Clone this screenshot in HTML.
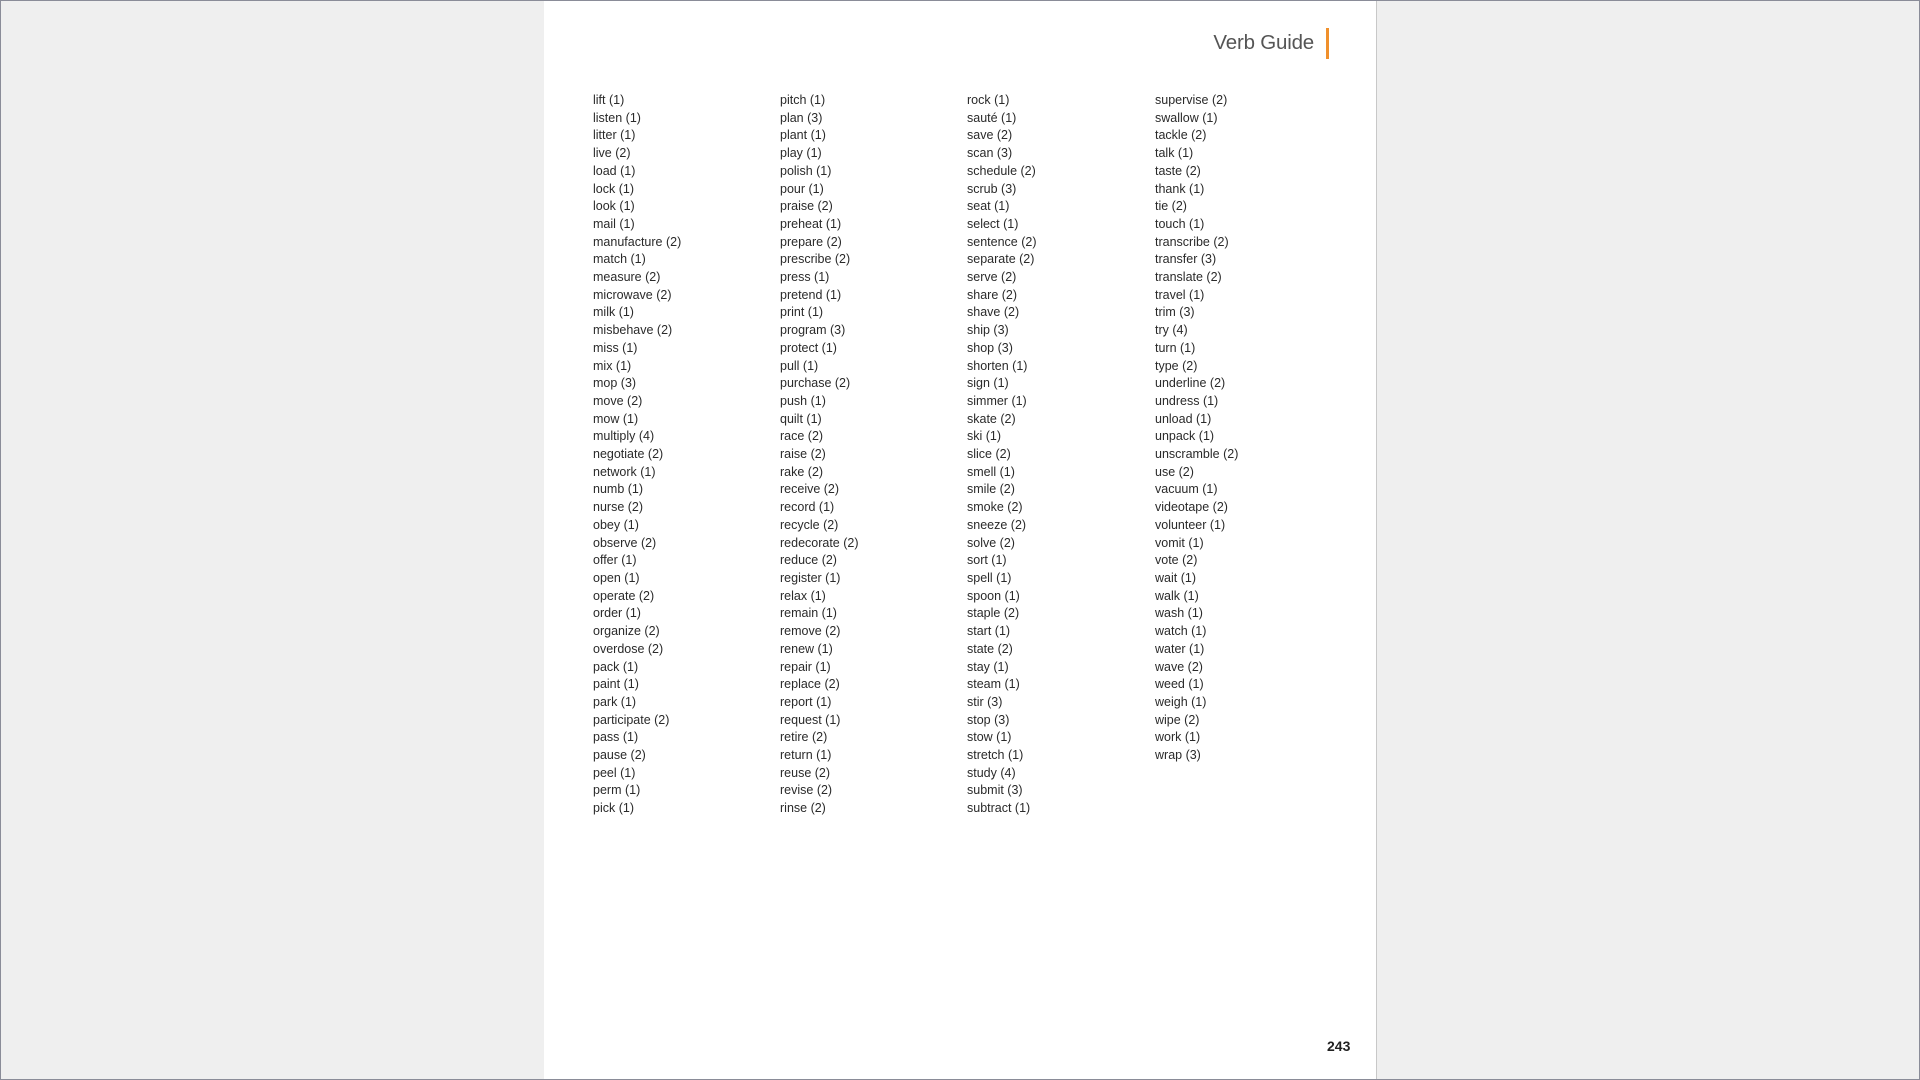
<!DOCTYPE html>
<html><head><meta charset="utf-8"><style>
html,body{margin:0;padding:0}
body{width:1920px;height:1080px;background:#efefef;position:relative;overflow:hidden;font-family:"Liberation Sans",sans-serif;}
.frame{position:absolute;left:0;top:0;width:1918px;height:1078px;border:1px solid #8a8c98;}
.page{position:absolute;left:544px;top:1px;width:832px;height:1078px;background:#fff;border-right:1px solid #c8c8c8;}
.title{position:absolute;right:62px;top:30px;font-size:20.5px;color:#555;letter-spacing:-0.2px;}
.bar{position:absolute;left:782px;top:27px;width:3px;height:31px;background:#f0902c;}
.col{position:absolute;top:91px;font-size:12.5px;color:#2a2a2a;line-height:17.7px;white-space:nowrap;}
.pn{position:absolute;left:783px;top:1037px;font-size:14px;font-weight:bold;color:#222;}
</style></head><body>
<div class="frame"></div>
<div class="page">
<div class="title">Verb Guide</div>
<div class="bar"></div>
<div class="col" style="left:49px">lift (1)<br>listen (1)<br>litter (1)<br>live (2)<br>load (1)<br>lock (1)<br>look (1)<br>mail (1)<br>manufacture (2)<br>match (1)<br>measure (2)<br>microwave (2)<br>milk (1)<br>misbehave (2)<br>miss (1)<br>mix (1)<br>mop (3)<br>move (2)<br>mow (1)<br>multiply (4)<br>negotiate (2)<br>network (1)<br>numb (1)<br>nurse (2)<br>obey (1)<br>observe (2)<br>offer (1)<br>open (1)<br>operate (2)<br>order (1)<br>organize (2)<br>overdose (2)<br>pack (1)<br>paint (1)<br>park (1)<br>participate (2)<br>pass (1)<br>pause (2)<br>peel (1)<br>perm (1)<br>pick (1)</div>
<div class="col" style="left:236px">pitch (1)<br>plan (3)<br>plant (1)<br>play (1)<br>polish (1)<br>pour (1)<br>praise (2)<br>preheat (1)<br>prepare (2)<br>prescribe (2)<br>press (1)<br>pretend (1)<br>print (1)<br>program (3)<br>protect (1)<br>pull (1)<br>purchase (2)<br>push (1)<br>quilt (1)<br>race (2)<br>raise (2)<br>rake (2)<br>receive (2)<br>record (1)<br>recycle (2)<br>redecorate (2)<br>reduce (2)<br>register (1)<br>relax (1)<br>remain (1)<br>remove (2)<br>renew (1)<br>repair (1)<br>replace (2)<br>report (1)<br>request (1)<br>retire (2)<br>return (1)<br>reuse (2)<br>revise (2)<br>rinse (2)</div>
<div class="col" style="left:423px">rock (1)<br>sauté (1)<br>save (2)<br>scan (3)<br>schedule (2)<br>scrub (3)<br>seat (1)<br>select (1)<br>sentence (2)<br>separate (2)<br>serve (2)<br>share (2)<br>shave (2)<br>ship (3)<br>shop (3)<br>shorten (1)<br>sign (1)<br>simmer (1)<br>skate (2)<br>ski (1)<br>slice (2)<br>smell (1)<br>smile (2)<br>smoke (2)<br>sneeze (2)<br>solve (2)<br>sort (1)<br>spell (1)<br>spoon (1)<br>staple (2)<br>start (1)<br>state (2)<br>stay (1)<br>steam (1)<br>stir (3)<br>stop (3)<br>stow (1)<br>stretch (1)<br>study (4)<br>submit (3)<br>subtract (1)</div>
<div class="col" style="left:611px">supervise (2)<br>swallow (1)<br>tackle (2)<br>talk (1)<br>taste (2)<br>thank (1)<br>tie (2)<br>touch (1)<br>transcribe (2)<br>transfer (3)<br>translate (2)<br>travel (1)<br>trim (3)<br>try (4)<br>turn (1)<br>type (2)<br>underline (2)<br>undress (1)<br>unload (1)<br>unpack (1)<br>unscramble (2)<br>use (2)<br>vacuum (1)<br>videotape (2)<br>volunteer (1)<br>vomit (1)<br>vote (2)<br>wait (1)<br>walk (1)<br>wash (1)<br>watch (1)<br>water (1)<br>wave (2)<br>weed (1)<br>weigh (1)<br>wipe (2)<br>work (1)<br>wrap (3)</div>
<div class="pn">243</div>
</div>
</body></html>
